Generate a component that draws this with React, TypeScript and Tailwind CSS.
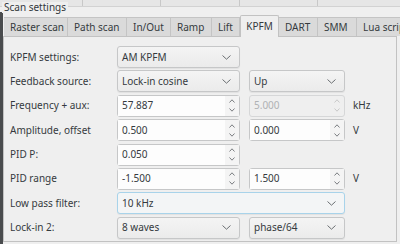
import React from "react";

const tabs = [
  { name: "Raster scan", w: "w-[64px]" },
  { name: "Path scan", w: "w-[59px]" },
  { name: "In/Out", w: "w-[44px]" },
  { name: "Ramp", w: "w-[41px]" },
  { name: "Lift", w: "w-[28px]" },
  { name: "KPFM", w: "w-[39px]", active: true },
  { name: "DART", w: "w-[39px]" },
  { name: "SMM", w: "w-[39px]" },
  { name: "Lua script", w: "w-[60px]" },
];

function Chevron({ up = false, small = false, color = "#6b6f73" }: { up?: boolean; small?: boolean; color?: string }) {
  const w = small ? 6 : 9;
  const h = small ? 4 : 5;
  return (
    <svg width={w} height={h} viewBox={`0 0 ${w} ${h}`} className="block">
      <path
        d={up ? `M0.5 ${h - 0.5} L${w / 2} 0.8 L${w - 0.5} ${h - 0.5}` : `M0.5 0.5 L${w / 2} ${h - 0.8} L${w - 0.5} 0.5`}
        fill="none"
        stroke={color}
        strokeWidth="1"
      />
    </svg>
  );
}

function Combo({ value, wide = false, focus = false }: { value: string; wide?: boolean; focus?: boolean }) {
  return (
    <div
      className={`flex h-[22px] items-center justify-between rounded-[3px] border pl-[4px] pr-[8px] shadow-[0_1px_1px_rgba(0,0,0,0.06)] ${
        wide ? "col-span-2" : ""
      } ${focus ? "border-[#a8d3ea] bg-[#f3f5f6]" : "border-[#c6c7c8] bg-gradient-to-b from-[#f4f4f4] to-[#ebebeb]"}`}
    >
      <span>{value}</span>
      <Chevron />
    </div>
  );
}

function Spin({ value, disabled = false }: { value: string; disabled?: boolean }) {
  return (
    <div
      className={`flex h-[22px] items-stretch rounded-[3px] border ${
        disabled ? "border-[#d6d7d8] bg-[#efefef] text-[#b0b2b4]" : "border-[#c6c7c8] bg-[#fcfcfc]"
      }`}
    >
      <span className={`flex flex-1 items-center pl-[4px] ${disabled ? "" : "bg-[#fdfdfd]"}`}>{value}</span>
      <span className={`flex w-[14px] flex-col items-center justify-center gap-[5px] ${disabled ? "" : "bg-[#f4f4f4]"}`}>
        <Chevron up small color={disabled ? "#c8c8c8" : "#7a7d80"} />
        <Chevron small color={disabled ? "#c8c8c8" : "#7a7d80"} />
      </span>
    </div>
  );
}

function Label({ text }: { text: string }) {
  return <div className="flex h-[22px] items-center">{text}</div>;
}

function Unit({ text }: { text: string }) {
  return <div className="flex h-[22px] items-center pl-[8px]">{text}</div>;
}

export default function App() {
  return (
    <div
      className="relative h-[244px] w-[400px] overflow-hidden bg-[#efefef] text-[10px] text-[#353a3e]"
      style={{ fontFamily: '"Noto Sans", "Open Sans", sans-serif' }}
    >
      {/* strip of the panel above */}
      <div className="flex h-[7px] border-b border-[#d2d2d2] bg-[#e6e6e6]">
        <div className="w-[83px] border-r border-[#c8c8c8]" />
        <div className="w-[78px] border-r border-[#c8c8c8]" />
        <div className="w-[79px] border-r border-[#c8c8c8]" />
        <div className="w-[78px] border-r border-[#c8c8c8]" />
      </div>
      <div className="absolute left-[2px] top-[2px] bg-[#efefef] px-[2px] leading-[11px] text-[#33383c]">
        Scan settings
      </div>

      <div className="flex">
        <div className="mt-[5px] h-[240px] w-[3px] bg-[#4a4c4e]" />
        <div className="flex w-[394px] flex-col">
          {/* tab bar */}
          <div className="mt-[8px] flex h-[21px] items-end pl-[1px]">
            {tabs.map((t) =>
              t.active ? (
                <div
                  key={t.name}
                  className={`${t.w} relative z-10 -mb-[1px] flex h-[22px] shrink-0 items-center justify-center rounded-t-[2px] border border-b-0 border-[#c2c2c2] bg-[#efefef] pb-[1px]`}
                >
                  {t.name}
                </div>
              ) : (
                <div
                  key={t.name}
                  className={`${t.w} flex h-[19px] shrink-0 items-center justify-start overflow-hidden whitespace-nowrap border-r border-t border-[#c4c4c4] bg-[#dadada] pl-[6px]`}
                >
                  {t.name}
                </div>
              )
            )}
          </div>

          {/* panel */}
          <div className="h-[206px] border border-[#c2c2c2] bg-[#efefef] pl-[6px] pt-[9px]">
            <div className="grid grid-cols-[107px_123px_105px_auto] gap-y-[2.4px]">
              <Label text="KPFM settings:" />
              <Combo value="AM KPFM" />
              <div />
              <div />

              <Label text="Feedback source:" />
              <Combo value="Lock-in cosine" />
              <div className="ml-[9px]">
                <Combo value="Up" />
              </div>
              <div />

              <Label text="Frequency + aux:" />
              <Spin value="57.887" />
              <div className="ml-[9px]">
                <Spin value="5.000" disabled />
              </div>
              <Unit text="kHz" />

              <Label text="Amplitude, offset" />
              <Spin value="0.500" />
              <div className="ml-[9px]">
                <Spin value="0.000" />
              </div>
              <Unit text="V" />

              <Label text="PID P:" />
              <Spin value="0.050" />
              <div />
              <div />

              <Label text="PID range" />
              <Spin value="-1.500" />
              <div className="ml-[9px]">
                <Spin value="1.500" />
              </div>
              <Unit text="V" />

              <Label text="Low pass filter:" />
              <Combo value="10 kHz" wide focus />
              <div />

              <Label text="Lock-in 2:" />
              <Combo value="8 waves" />
              <div className="ml-[9px]">
                <Combo value="phase/64" />
              </div>
              <div />
            </div>
          </div>
        </div>
      </div>
    </div>
  );
}
